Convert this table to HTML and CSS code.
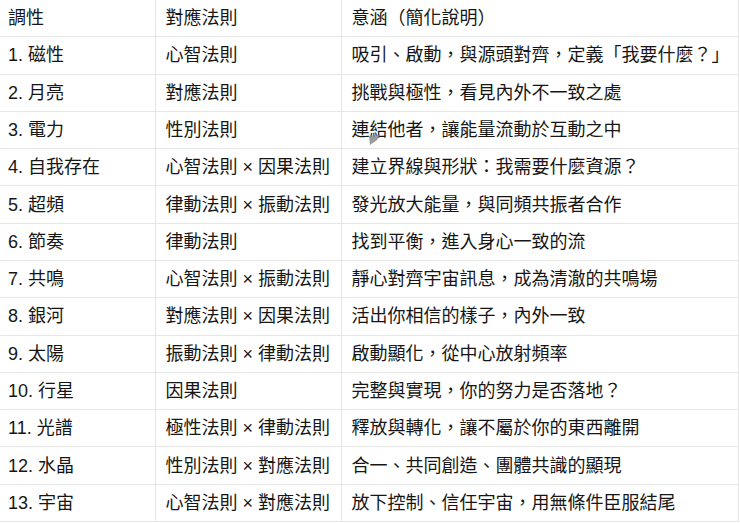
FILE: index.html
```html
<!DOCTYPE html>
<html lang="zh-Hant">
<head>
<meta charset="utf-8">
<link rel="stylesheet" href="styles.css">
</head>
<body>
<table class="grid">
  <colgroup><col class="c1"><col class="c2"><col class="c3"></colgroup>
  <thead>
    <tr><th>調性</th><th>對應法則</th><th>意涵（簡化說明）</th></tr>
  </thead>
  <tbody>
    <tr><td>1. 磁性</td><td>心智法則</td><td>吸引、啟動，與源頭對齊，定義「我要什麼？」</td></tr>
    <tr><td>2. 月亮</td><td>對應法則</td><td>挑戰與極性，看見內外不一致之處</td></tr>
    <tr><td>3. 電力</td><td>性別法則</td><td>連結他者，讓能量流動於互動之中</td></tr>
    <tr><td>4. 自我存在</td><td>心智法則 × 因果法則</td><td>建立界線與形狀：我需要什麼資源？</td></tr>
    <tr><td>5. 超頻</td><td>律動法則 × 振動法則</td><td>發光放大能量，與同頻共振者合作</td></tr>
    <tr><td>6. 節奏</td><td>律動法則</td><td>找到平衡，進入身心一致的流</td></tr>
    <tr><td>7. 共鳴</td><td>心智法則 × 振動法則</td><td>靜心對齊宇宙訊息，成為清澈的共鳴場</td></tr>
    <tr><td>8. 銀河</td><td>對應法則 × 因果法則</td><td>活出你相信的樣子，內外一致</td></tr>
    <tr><td>9. 太陽</td><td>振動法則 × 律動法則</td><td>啟動顯化，從中心放射頻率</td></tr>
    <tr><td>10. 行星</td><td>因果法則</td><td>完整與實現，你的努力是否落地？</td></tr>
    <tr><td>11. 光譜</td><td>極性法則 × 律動法則</td><td>釋放與轉化，讓不屬於你的東西離開</td></tr>
    <tr><td>12. 水晶</td><td>性別法則 × 對應法則</td><td>合一、共同創造、團體共識的顯現</td></tr>
    <tr><td>13. 宇宙</td><td>心智法則 × 對應法則</td><td>放下控制、信任宇宙，用無條件臣服結尾</td></tr>
  </tbody>
</table>
<svg class="cursor" width="14" height="12" viewBox="0 0 14 12"><path d="M1 2 L12 1 L9 6 L2 11 Z" fill="#8a8a8a" opacity="0.85"/></svg>
</body>
</html>
```

FILE: styles.css
```css
html, body {
  margin: 0;
  padding: 0;
  background: #ffffff;
}
body {
  position: relative;
  width: 740px;
  height: 523px;
  overflow: hidden;
  font-family: "Liberation Sans", "Noto Sans CJK TC", sans-serif;
  color: #161616;
}
.grid {
  border-collapse: collapse;
  table-layout: fixed;
  width: 738px;
  font-size: 18px;
}
.c1 { width: 155px; }
.c2 { width: 186px; }
.c3 { width: 397px; }
.grid th,
.grid td {
  font-weight: normal;
  text-align: left;
  white-space: nowrap;
  line-height: 24px;
  height: 24px;
  padding: 6.15px 0 6.15px 10px;
  border-bottom: 1px solid #e6e6e6;
  border-right: 1px solid #e6e6e6;
}
.grid th:first-child,
.grid td:first-child {
  padding-left: 8px;
}
.cursor {
  position: absolute;
  left: 368px;
  top: 134px;
}
```
